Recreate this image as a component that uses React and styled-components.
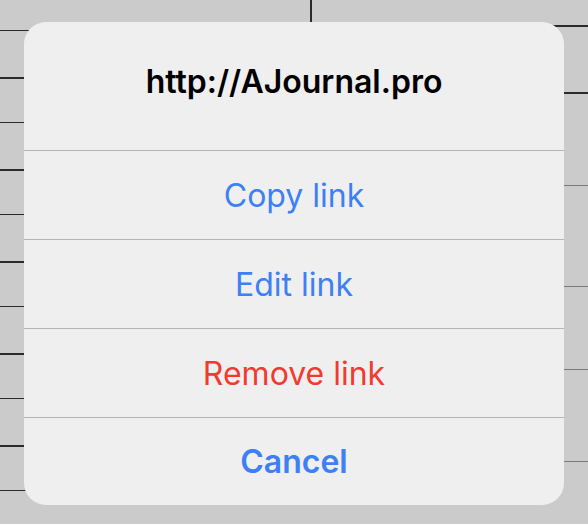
import React from "react";
import styled, { createGlobalStyle } from "styled-components";

const Global = createGlobalStyle`
  html, body { margin: 0; padding: 0; }
  body { font-family: Inter, "Noto Sans", sans-serif; background: #cbcbcb; }
`;

const Page = styled.div`
  position: relative;
  width: 588px;
  height: 524px;
  overflow: hidden;
  background: #cbcbcb;
  display: flex;
  align-items: flex-start;
  justify-content: center;
  padding-top: 22px;
  box-sizing: border-box;
`;

const Backdrop = styled.svg`
  position: absolute;
  inset: 0;
`;

const Sheet = styled.div`
  position: relative;
  width: 540px;
  height: 483px;
  background: #efefef;
  border-radius: 22px;
  display: flex;
  flex-direction: column;
  overflow: hidden;
`;

const Header = styled.div`
  height: 129px;
  display: flex;
  align-items: center;
  justify-content: center;
  padding-bottom: 10px;
  box-sizing: border-box;
  border-bottom: 1px solid #b4b4b4;
`;

const Title = styled.div`
  font-size: 32px;
  font-weight: 600;
  color: #000;
  letter-spacing: 0px;
`;

const Action = styled.button`
  height: 89px;
  border: none;
  background: transparent;
  border-bottom: ${(p) => (p.$last ? "none" : "1px solid #b4b4b4")};
  font-family: inherit;
  font-size: 32px;
  font-weight: ${(p) => (p.$bold ? 600 : 400)};
  color: ${(p) => (p.$danger ? "#f03b30" : "#3d7ff5")};
  display: flex;
  align-items: center;
  justify-content: center;
  padding: 0;
  box-sizing: border-box;
  flex: ${(p) => (p.$last ? 1 : "none")};
  letter-spacing: 0px;
`;

const leftLines = [
  [30, 1], [77, 2], [122, 1], [169, 2], [214, 1], [261, 2],
  [306, 1], [353, 2], [398, 1], [445, 2], [490, 1],
];
const rightLines = [
  [25, 2, "#2a2a2a"], [92, 2, "#2a2a2a"], [185, 1, "#7a7a7a"],
  [286, 1, "#7a7a7a"], [369, 1, "#7a7a7a"], [461, 1, "#7a7a7a"],
];

export default function App() {
  return (
    <>
      <Global />
      <Page>
        <Backdrop width="588" height="524" viewBox="0 0 588 524">
          {leftLines.map(([y, w]) => (
            <rect key={"l" + y} x="0" y={y} width="40" height={w} fill="#2a2a2a" />
          ))}
          {rightLines.map(([y, w, c]) => (
            <rect key={"r" + y} x="540" y={y} width="48" height={w} fill={c} />
          ))}
          <rect x="310" y="0" width="2" height="30" fill="#2a2a2a" />
        </Backdrop>
        <Sheet>
          <Header>
            <Title>http://AJournal.pro</Title>
          </Header>
          <Action>Copy link</Action>
          <Action>Edit link</Action>
          <Action $danger>Remove link</Action>
          <Action $bold $last>Cancel</Action>
        </Sheet>
      </Page>
    </>
  );
}
